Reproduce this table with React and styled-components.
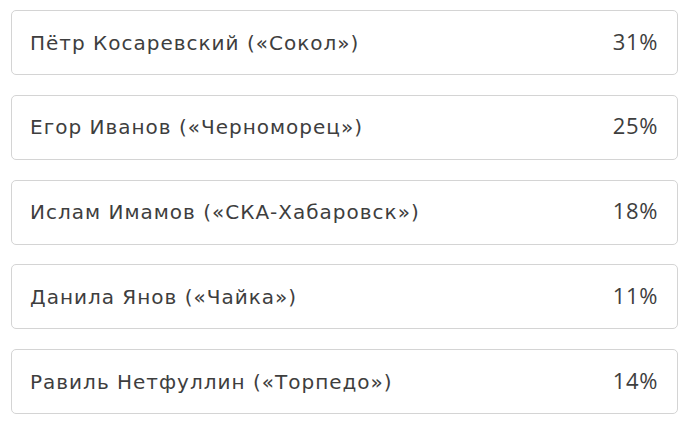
import React from "react";
import styled, { createGlobalStyle } from "styled-components";

const GlobalStyle = createGlobalStyle`
  body {
    margin: 0;
    background: #fff;
  }
`;

const List = styled.div`
  display: flex;
  flex-direction: column;
  gap: 19.75px;
  padding: 10px 12px 0 11px;
`;

const Item = styled.div`
  display: flex;
  align-items: center;
  justify-content: space-between;
  box-sizing: border-box;
  height: 65px;
  padding: 0 19px 0 18px;
  border: 1px solid #d4d4d4;
  border-radius: 5px;
  color: #3e3e3e;
`;

const Name = styled.span`
  font-family: "DejaVu Sans", "Open Sans", sans-serif;
  font-size: 20px;
  letter-spacing: 1px;
`;

const Percent = styled.span`
  font-family: "Open Sans", "Liberation Sans", sans-serif;
  font-size: 22px;
  letter-spacing: 0.6px;
  margin-bottom: 4px;
`;

const results = [
  { name: "Пётр Косаревский («Сокол»)", value: 31 },
  { name: "Егор Иванов («Черноморец»)", value: 25 },
  { name: "Ислам Имамов («СКА-Хабаровск»)", value: 18 },
  { name: "Данила Янов («Чайка»)", value: 11 },
  { name: "Равиль Нетфуллин («Торпедо»)", value: 14 }
];

const App = () => (
  <>
    <GlobalStyle />
    <List>
      {results.map(r => (
        <Item key={r.name}>
          <Name>{r.name}</Name>
          <Percent>{r.value}%</Percent>
        </Item>
      ))}
    </List>
  </>
);

export default App;
